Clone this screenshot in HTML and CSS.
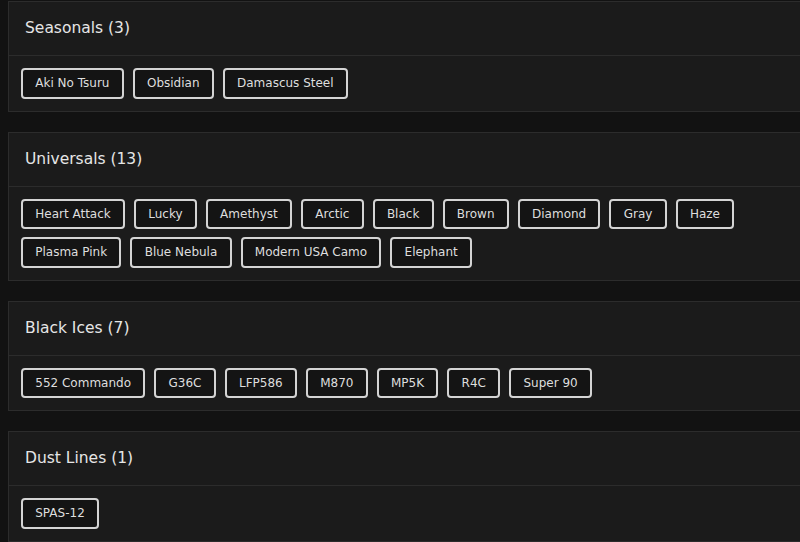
FILE: index.html
```html
<!DOCTYPE html>
<html>
<head>
<meta charset="utf-8">
<link rel="stylesheet" href="styles.css">
</head>
<body>
<div class="list">
  <section class="card">
    <h2 class="card-head">Seasonals (3)</h2>
    <div class="card-body">
      <span class="chip">Aki No Tsuru</span>
      <span class="chip">Obsidian</span>
      <span class="chip">Damascus Steel</span>
    </div>
  </section>
  <section class="card">
    <h2 class="card-head">Universals (13)</h2>
    <div class="card-body">
      <span class="chip">Heart Attack</span>
      <span class="chip">Lucky</span>
      <span class="chip">Amethyst</span>
      <span class="chip">Arctic</span>
      <span class="chip">Black</span>
      <span class="chip">Brown</span>
      <span class="chip">Diamond</span>
      <span class="chip">Gray</span>
      <span class="chip">Haze</span>
      <span class="chip">Plasma Pink</span>
      <span class="chip">Blue Nebula</span>
      <span class="chip">Modern USA Camo</span>
      <span class="chip">Elephant</span>
    </div>
  </section>
  <section class="card">
    <h2 class="card-head">Black Ices (7)</h2>
    <div class="card-body">
      <span class="chip">552 Commando</span>
      <span class="chip">G36C</span>
      <span class="chip">LFP586</span>
      <span class="chip">M870</span>
      <span class="chip">MP5K</span>
      <span class="chip">R4C</span>
      <span class="chip">Super 90</span>
    </div>
  </section>
  <section class="card">
    <h2 class="card-head">Dust Lines (1)</h2>
    <div class="card-body">
      <span class="chip">SPAS-12</span>
    </div>
  </section>
</div>
</body>
</html>
```
FILE: styles.css
```css
html, body {
  margin: 0;
  background: #121212;
}
body {
  padding: 1px 0 0 8px;
  font-family: "DejaVu Sans", sans-serif;
  overflow: hidden;
}
.list {
  display: flex;
  flex-direction: column;
  gap: 20px;
  margin-right: -30px;
}
.card {
  background: #1b1b1b;
  border: 1px solid #2c2c2c;
}
.card-head {
  margin: 0;
  height: 54px;
  box-sizing: border-box;
  padding: 0 15px 1px 16px;
  display: flex;
  align-items: center;
  font-size: 15.5px;
  font-weight: normal;
  color: #e6e6e6;
  border-bottom: 1px solid #2c2c2c;
}
.card-body {
  padding: 12px 12px;
  display: flex;
  flex-wrap: wrap;
  gap: 8px 9px;
}
.chip {
  display: inline-flex;
  align-items: center;
  height: 30.5px;
  box-sizing: border-box;
  padding: 0 12.25px;
  border: 2px solid #d4d4d4;
  border-radius: 4px;
  background: #141414;
  color: #dedede;
  font-size: 12px;
}
```
